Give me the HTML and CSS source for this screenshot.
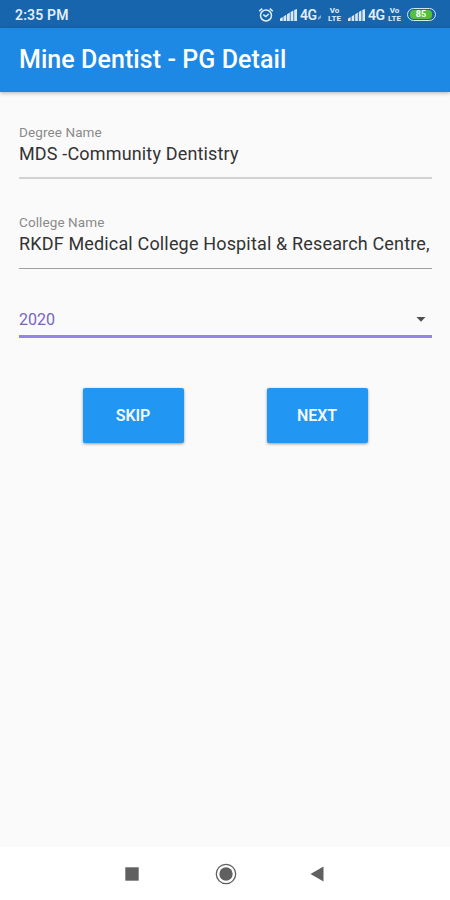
FILE: index.html
```html
<!DOCTYPE html>
<html lang="en">
<head>
    <meta charset="UTF-8">
    <meta name="viewport" content="width=device-width, initial-scale=1.0">
    <title>Mine Dentist - PG Detail</title>
    <link rel="stylesheet" href="styles.css">
</head>
<body>
    <!-- Status bar -->
    <div class="status-bar">
        <span class="time">2:35 PM</span>
        <div class="status-icons">
            <svg class="alarm" width="16" height="16" viewBox="0 0 16 16" fill="none" stroke="#e3eefa" stroke-width="1.5">
                <circle cx="8" cy="8.5" r="5.5"/>
                <path d="M5.3 7.6l2.5 2 3-2.6M1.2 4.2l3-2.6M14.8 4.2l-3-2.6"/>
            </svg>
            <svg class="signal" width="17" height="12" viewBox="0 0 17 12" fill="#d9e8f7">
                <path d="M0 9.5L2.8 8v4H0zM3.5 7.5l2.8-1.7V12H3.5zM7 5.3l2.8-1.7V12H7zM10.6 3l2.8-1.6V12h-2.8zM14.2 1L17 0v12h-2.8z"/>
            </svg>
            <span class="network">4G</span>
            <svg class="data" width="3" height="5" viewBox="0 0 3 5" fill="#7eafdd"><path d="M0 5V2.5L3 0v3z"/></svg>
            <span class="volte"><span>Vo</span><span>LTE</span></span>
            <svg class="signal second" width="17" height="12" viewBox="0 0 17 12" fill="#d9e8f7">
                <path d="M0 9.5L2.6 8v4H0zM3.6 7.5l2.6-1.7V12H3.6zM7.2 5.3l2.6-1.7V12H7.2zM10.8 3l2.6-1.6V12h-2.6zM14.4 1L17 0v12h-2.6z"/>
            </svg>
            <span class="network">4G</span>
            <span class="volte last"><span>Vo</span><span>LTE</span></span>
            <span class="battery"><span class="battery-level">85</span></span>
        </div>
    </div>

    <header class="app-bar">
        <h1>Mine Dentist - PG Detail</h1>
    </header>

    <main class="form">
        <div class="field">
            <label>Degree Name</label>
            <div class="value">MDS -Community Dentistry</div>
        </div>
        <div class="field college">
            <label>College Name</label>
            <div class="value">RKDF Medical College Hospital &amp; Research Centre,</div>
        </div>
        <div class="select">
            <span>2020</span>
            <svg width="10" height="5" viewBox="0 0 10 5" fill="#505050"><path d="M.5 0h9L5 4.8z"/></svg>
        </div>
        <div class="buttons">
            <button>SKIP</button>
            <button>NEXT</button>
        </div>
    </main>

    <!-- Android navigation -->
    <nav class="nav-bar">
        <svg width="14" height="14" viewBox="0 0 14 14" fill="#606060"><path d="M.3.3h13.4v13.4H.3z"/></svg>
        <svg class="home" width="22" height="22" viewBox="0 0 22 22">
            <circle cx="11" cy="11" r="9.7" fill="none" stroke="#606060" stroke-width="1.3"/>
            <circle cx="11" cy="11" r="6.7" fill="#606060"/>
        </svg>
        <svg class="back" width="14" height="16" viewBox="0 0 14 16" fill="#606060"><path d="M.5 8L13.5.5v15z"/></svg>
    </nav>
</body>
</html>
```
FILE: styles.css
```css
* {
    box-sizing: border-box;
}

body {
    margin: 0;
    height: 900px;
    display: flex;
    flex-direction: column;
    background: #fafafa;
    font-family: Roboto, "Liberation Sans", sans-serif;
    overflow: hidden;
}

svg {
    display: block;
    flex: none;
}

.status-bar {
    height: 28px;
    padding: 1px 14px 0 15px;
    display: flex;
    justify-content: space-between;
    align-items: center;
    background: #1766ad;
    color: #e3eefa;
}

.time {
    font-size: 14px;
    font-weight: 600;
    letter-spacing: 0.15px;
}

.status-icons {
    display: flex;
    align-items: center;
}

.alarm {
    margin-right: 6px;
}

.network {
    width: 17px;
    margin-left: 3px;
    font-size: 14px;
    font-weight: 600;
    letter-spacing: -0.5px;
}

.data {
    margin: 5px 6px 0 1px;
}

.volte {
    width: 15px;
    display: flex;
    flex-direction: column;
    align-items: center;
    font-size: 8px;
    line-height: 8px;
    font-weight: 700;
}

.volte.last {
    margin: 0 5px 0 2px;
}

.second {
    margin-left: 6px;
}

.battery {
    width: 29px;
    height: 13px;
    padding: 1px;
    border: 1.5px solid #d5e7ee;
    border-radius: 7px;
}

.battery-level {
    display: block;
    height: 9px;
    width: 22px;
    margin-left: 1px;
    border-radius: 4px;
    background: #58bf3b;
    color: #fff;
    font-size: 9px;
    line-height: 9px;
    font-weight: 700;
    text-align: center;
}

.app-bar {
    height: 64px;
    padding: 0 19px 2px;
    display: flex;
    align-items: center;
    background: #1e88e5;
    box-shadow: 0 1px 4px rgba(0, 0, 0, 0.3);
}

.app-bar h1 {
    margin: 0;
    color: #fff;
    font-size: 25px;
    font-weight: 500;
    letter-spacing: 0.07px;
    white-space: nowrap;
}

.form {
    flex: 1;
    padding: 32px 18px 0 19px;
}

.field {
    height: 55px;
    border-bottom: 2px solid #d2d2d2;
}

.field.college {
    margin-top: 35px;
    border-bottom: 1px solid #a0a0a0;
}

.field label {
    display: block;
    font-size: 13.5px;
    line-height: 17px;
    letter-spacing: 0.1px;
    color: #8a8a8a;
}

.value {
    font-size: 18px;
    line-height: 26px;
    letter-spacing: 0.16px;
    color: #333;
    white-space: nowrap;
}

.select {
    height: 30px;
    margin-top: 39px;
    padding: 0 6px 4px 0;
    display: flex;
    justify-content: space-between;
    align-items: center;
    border-bottom: 3px solid #9482ee;
    color: #7765bd;
    font-size: 16px;
}

.buttons {
    margin-top: 50px;
    padding: 0 64px;
    display: flex;
    justify-content: space-between;
}

button {
    width: 101px;
    height: 55px;
    padding: 0 1px 0 0;
    border: none;
    border-radius: 2px;
    background: #2196f3;
    box-shadow: 0 1px 3px rgba(0, 0, 0, 0.4);
    color: #f2f8ff;
    font-family: inherit;
    font-size: 16px;
    font-weight: 600;
    letter-spacing: -0.1px;
}

.nav-bar {
    height: 53px;
    padding-left: 125px;
    display: flex;
    align-items: center;
    background: #fff;
}

.home {
    margin-left: 76px;
}

.back {
    margin-left: 73px;
}
```
